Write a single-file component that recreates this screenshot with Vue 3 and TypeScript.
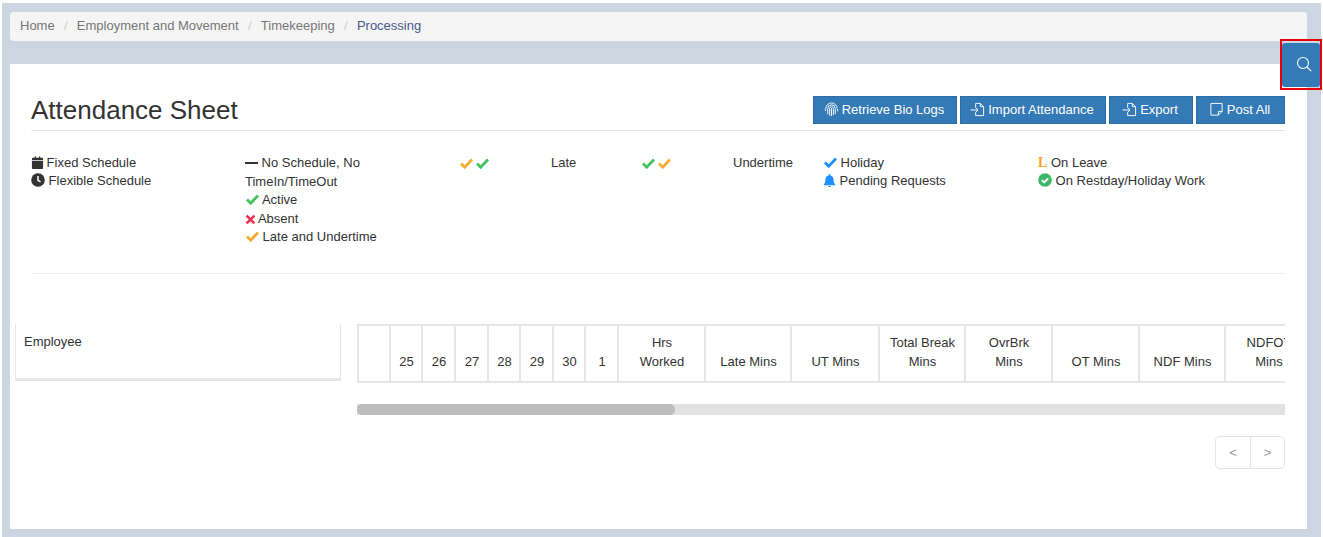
<template>
  <div class="page">
    <nav class="crumbs">
      <template v-for="(item, i) in crumbs" :key="item">
        <span v-if="i" class="crumbs__sep">/</span>
        <span :class="i === crumbs.length - 1 ? 'crumbs__now' : 'crumbs__link'">{{ item }}</span>
      </template>
    </nav>

    <main class="sheet">
      <header class="sheet__head">
        <h1>Attendance Sheet</h1>
        <div class="actions">
          <button class="btn btn--bio">
            <svg viewBox="0 0 16 16" class="ico-fp">
              <path d="M2 7a6 6 0 0 1 12 0M1.500 9.500V7M14.500 10V7.500M4 13V7a4 4 0 0 1 8 0v6M6 14.500V7a2 2 0 0 1 4 0v7M8 15V6.500" />
            </svg>
            Retrieve Bio Logs
          </button>
          <button class="btn btn--import">
            <svg viewBox="0 0 16 16" class="ico-file">
              <path d="M6 6V1.500h5l3.500 3.500v9.500H6V11M11 1.500V5h3.500M.5 8.500H8M6 6l2.500 2.500L6 11" />
            </svg>
            Import Attendance
          </button>
          <button class="btn btn--export">
            <svg viewBox="0 0 16 16" class="ico-file">
              <path d="M6 6V1.500h5l3.500 3.500v9.500H6V11M11 1.500V5h3.500M.5 8.500H8M6 6l2.500 2.500L6 11" />
            </svg>
            Export
          </button>
          <button class="btn btn--post">
            <svg viewBox="0 0 16 16" class="ico-file">
              <path d="M14 1.500H2v12.500h8l4-4zM14 10h-4v4" />
            </svg>
            Post All
          </button>
        </div>
      </header>

      <section class="legend">
        <div>
          <p>
            <svg viewBox="0 0 14 14" class="i-sm i-cal"><path fill="#333" d="M1 5h12v8a1 1 0 0 1-1 1H2a1 1 0 0 1-1-1zM2 2h2V.5h1.500V2h3V.5H10V2h2a1 1 0 0 1 1 1v1.200H1V3a1 1 0 0 1 1-1z" /></svg>
            Fixed Schedule
          </p>
          <p>
            <svg viewBox="0 0 14 14" class="i-round"><circle cx="7" cy="7" r="6.800" fill="#333" /><path d="M7 3v4.300l2.600 1.600" fill="none" stroke="#fff" stroke-width="1.500" /></svg>
            Flexible Schedule
          </p>
        </div>
        <div>
          <p class="wrap"><span class="dash"></span> No Schedule, No TimeIn/TimeOut</p>
          <p class="tall"><svg viewBox="0 0 14 14" class="i-check green"><path :d="checkPath" /></svg> Active</p>
          <p class="tall"><svg viewBox="0 0 14 14" class="i-x"><path d="M2 2l10 10M12 2L2 12" /></svg> Absent</p>
          <p class="tall"><svg viewBox="0 0 14 14" class="i-check amber"><path :d="checkPath" /></svg> Late and Undertime</p>
        </div>
        <div class="pair">
          <span class="checks">
            <svg viewBox="0 0 14 14" class="i-check amber"><path :d="checkPath" /></svg>
            <svg viewBox="0 0 14 14" class="i-check green"><path :d="checkPath" /></svg>
          </span>
          <span>Late</span>
        </div>
        <div class="pair">
          <span class="checks">
            <svg viewBox="0 0 14 14" class="i-check green"><path :d="checkPath" /></svg>
            <svg viewBox="0 0 14 14" class="i-check amber"><path :d="checkPath" /></svg>
          </span>
          <span>Undertime</span>
        </div>
        <div>
          <p><svg viewBox="0 0 14 14" class="i-check blue"><path :d="checkPath" /></svg> Holiday</p>
          <p>
            <svg viewBox="0 0 14 14" class="i-sm"><path fill="#1e90ff" d="M7 0a1 1 0 0 1 1 1v.6c2.200.5 3.400 2.200 3.400 4.400 0 3 .6 3.900 1.600 5v1H1v-1c1-1.100 1.600-2 1.600-5C2.600 3.800 3.800 2.100 6 1.600V1a1 1 0 0 1 1-1zM5.500 13h3a1.500 1.200 0 0 1-3 0z" /></svg>
            Pending Requests
          </p>
        </div>
        <div>
          <p><span class="leave">L</span> On Leave</p>
          <p>
            <svg viewBox="0 0 14 14" class="i-round"><circle cx="7" cy="7" r="6.800" fill="#3cb868" /><path d="M3.800 7.200l2.300 2.300 4.100-4.200" fill="none" stroke="#fff" stroke-width="1.800" /></svg>
            On Restday/Holiday Work
          </p>
        </div>
      </section>

      <section class="grid-area">
        <div class="employee">Employee</div>
        <div class="table-side">
          <div class="table-clip">
            <table>
              <thead>
                <tr>
                  <th
                    v-for="col in columns"
                    :key="col.label"
                    :style="{ width: col.width + 'px' }"
                  >
                    <span v-html="col.label"></span>
                  </th>
                </tr>
              </thead>
            </table>
          </div>
          <div class="scroll"><div class="scroll__thumb"></div></div>
          <div class="pager">
            <button>&lt;</button>
            <button>&gt;</button>
          </div>
        </div>
      </section>
    </main>

    <button class="search-tab" aria-label="Search">
      <svg viewBox="0 0 16 16"><circle cx="7" cy="7" r="5.500" /><path d="M11 11l4.200 4.200" /></svg>
    </button>
    <div class="callout"></div>
  </div>
</template>

<script setup lang="ts">
const crumbs = ['Home', 'Employment and Movement', 'Timekeeping', 'Processing'];

const checkPath = 'M1.500 7.500l3.700 3.700 7.300-7.700';

const columns = [
  { label: '&nbsp;', width: 32 },
  { label: '25', width: 32 },
  { label: '26', width: 33 },
  { label: '27', width: 33 },
  { label: '28', width: 32 },
  { label: '29', width: 33 },
  { label: '30', width: 32 },
  { label: '1', width: 33 },
  { label: 'Hrs<br>Worked', width: 87 },
  { label: 'Late Mins', width: 86 },
  { label: 'UT Mins', width: 88 },
  { label: 'Total Break<br>Mins', width: 86 },
  { label: 'OvrBrk<br>Mins', width: 87 },
  { label: 'OT Mins', width: 87 },
  { label: 'NDF Mins', width: 86 },
  { label: 'NDFOT<br>Mins', width: 87 }
];
</script>

<style>
html,
body {
  margin: 0;
  background: #fff;
}
</style>

<style scoped>
.page {
  position: relative;
  box-sizing: border-box;
  width: 1319px;
  height: 534px;
  margin: 3px 0 0 2px;
  padding: 9px 14px 4px 8px;
  background: #ccd6e1;
  font-family: 'Liberation Sans', Arial, sans-serif;
  font-size: 13px;
  color: #333;
}

.crumbs {
  box-sizing: border-box;
  height: 29px;
  display: flex;
  align-items: center;
  padding: 0 10px 2px;
  background: #f5f5f5;
  border-radius: 4px;
  color: #777;
}

.crumbs__sep {
  margin: 0 9.250px;
  color: #ccc;
}

.crumbs__now {
  color: #4a5a8c;
}

.sheet {
  box-sizing: border-box;
  height: 465px;
  margin-top: 23px;
  padding: 32px 22px 0 21px;
  background: #fff;
}

.sheet__head {
  display: flex;
  justify-content: space-between;
  height: 34px;
  border-bottom: 1px solid #e6e6e6;
}

h1 {
  margin: 0;
  font-size: 26px;
  font-weight: 400;
  line-height: 28px;
}

.actions {
  display: flex;
  gap: 3px;
  height: 28px;
}

.btn {
  display: flex;
  align-items: center;
  justify-content: center;
  gap: 3px;
  box-sizing: border-box;
  height: 28px;
  padding: 0 2px 2px 0;
  border: 1px solid #2e6da4;
  background: #337ab7;
  color: #fff;
  font: 13px 'Liberation Sans', Arial, sans-serif;
}

.btn svg {
  width: 15px;
  height: 15px;
  fill: none;
  stroke: #fff;
  stroke-width: 1;
}

.btn--bio {
  width: 144px;
}

.btn--import {
  width: 146px;
}

.btn--export {
  width: 84px;
}

.btn--post {
  width: 89px;
}

.legend {
  display: grid;
  grid-template-columns: 214px 214px 182px 182px 215px 1fr;
  height: 143px;
  padding-top: 23px;
  box-sizing: border-box;
  border-bottom: 1px solid #eee;
  line-height: 18px;
}

.legend p {
  margin: 0;
  white-space: nowrap;
}

.legend p.wrap {
  width: 150px;
  margin-top: -1px;
  white-space: normal;
  line-height: 19px;
}

.legend p.tall {
  line-height: 18.500px;
}

.legend svg {
  vertical-align: -2px;
}

.i-sm {
  width: 13px;
  height: 13px;
}

.i-cal {
  margin-right: -1px;
}

.i-round {
  width: 14px;
  height: 14px;
}

.i-check {
  width: 15px;
  height: 14px;
  margin-right: -1px;
  fill: none;
  stroke-width: 2.800;
}

.green {
  stroke: #45c15f;
}

.amber {
  stroke: #f8ac30;
}

.blue {
  stroke: #1e90ff;
}

.i-x {
  width: 11px;
  height: 11px;
  margin-right: -1px;
  fill: none;
  stroke: #f02d4f;
  stroke-width: 3.200;
}

.dash {
  display: inline-block;
  width: 13px;
  height: 2px;
  vertical-align: 3px;
  background: #333;
}

.leave {
  font-family: 'Liberation Serif', serif;
  font-size: 14px;
  font-weight: 700;
  color: #f8a51f;
}

.pair {
  display: grid;
  grid-template-columns: 92px 90px;
}

.checks {
  display: flex;
  gap: 2px;
  height: 17px;
  align-items: center;
}

.grid-area {
  display: flex;
  margin: 50px 0 0 -16px;
}

.employee {
  box-sizing: border-box;
  width: 326px;
  height: 57px;
  padding: 10px 8px;
  border: 2px solid #e6e6e6;
  border-width: 0 1px 3px;
}

.table-side {
  width: 928px;
  margin-left: 16px;
}

.table-clip {
  width: 928px;
  overflow: hidden;
}

table {
  border-collapse: collapse;
  table-layout: fixed;
  width: 954px;
}

th {
  box-sizing: border-box;
  height: 57px;
  padding: 0 0 10px 1px;
  border: 2px solid #e6e6e6;
  font-weight: 400;
  line-height: 19px;
  text-align: center;
  vertical-align: bottom;
}

.scroll {
  height: 11px;
  margin-top: 21px;
  background: #e2e2e2;
}

.scroll__thumb {
  width: 318px;
  height: 100%;
  background: #bdbdbd;
  border-radius: 5px;
}

.pager {
  display: flex;
  justify-content: flex-end;
  margin-top: 21px;
}

.pager button {
  box-sizing: border-box;
  width: 35px;
  height: 33px;
  padding: 0;
  background: #fff;
  border: 1px solid #e4e4e4;
  color: #999;
  font: 13px 'Liberation Sans', Arial, sans-serif;
}

.pager button:first-child {
  border-radius: 5px 0 0 5px;
  border-right: 0;
}

.pager button:last-child {
  border-radius: 0 5px 5px 0;
}

.search-tab {
  position: absolute;
  left: 1280px;
  top: 40px;
  width: 38px;
  height: 44px;
  padding: 0 0 2px 5px;
  display: flex;
  align-items: center;
  justify-content: center;
  background: #337ab7;
  border: 0;
  border-radius: 3px;
}

.search-tab svg {
  width: 16px;
  height: 16px;
  fill: none;
  stroke: #fff;
  stroke-width: 1.100;
}

.callout {
  position: absolute;
  left: 1278px;
  top: 36px;
  width: 42px;
  height: 51px;
  box-sizing: border-box;
  border: 2px solid #e8000b;
}
</style>
